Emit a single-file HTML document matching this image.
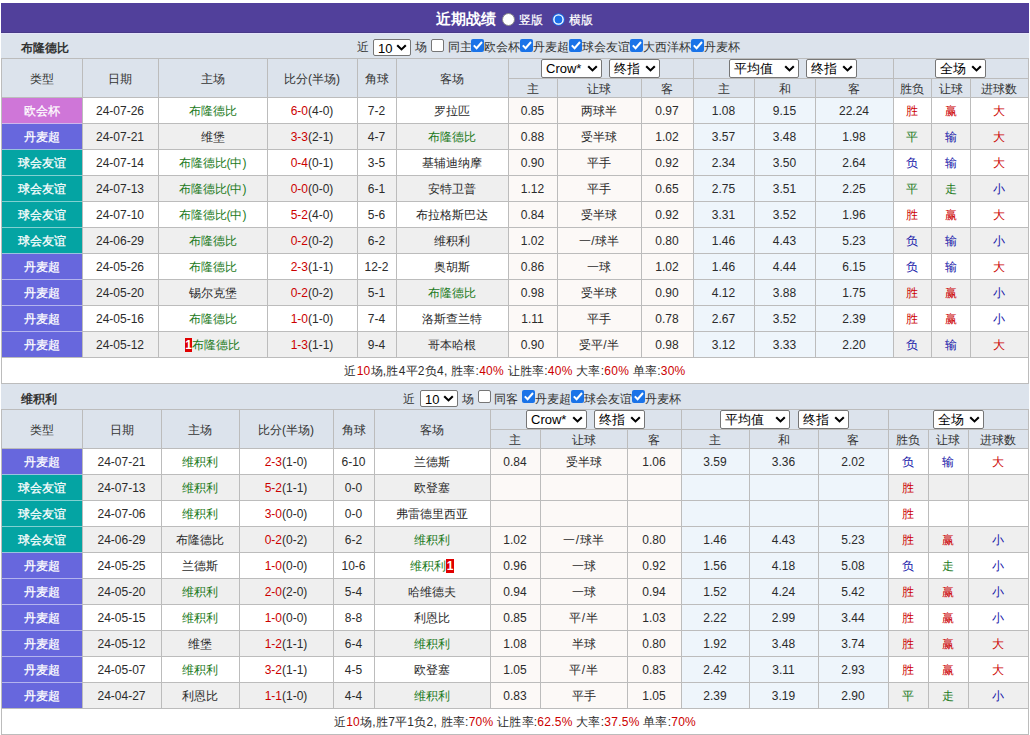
<!DOCTYPE html>
<html><head><meta charset="utf-8"><style>
html,body{margin:0;padding:0;background:#fff;width:1030px;height:735px;overflow:hidden}
body{position:relative;font-family:"Liberation Sans", sans-serif;font-size:12px;color:#2b2b2b}
body>div{position:absolute}
.t{text-align:center;white-space:nowrap}
.sel{background:#fff;border:1px solid #767676;border-radius:2px;box-sizing:border-box;font-size:13px;color:#000}
.sel span{position:absolute;left:4px;top:0;line-height:17px}
</style></head><body>
<div style="left:1px;top:3px;width:1028px;height:30px;background:#51409b;"></div><div style="left:1px;top:32px;width:1028px;height:1px;background:#483a88;"></div><div style="left:1px;top:33px;width:1028px;height:25px;background:#dce3ec;"></div><div style="left:1px;top:33px;width:1028px;height:1px;background:#e4e4fa;"></div><div class="t" style="left:21px;top:33px;height:25px;line-height:31px;font-weight:bold;color:#333;text-align:left">布隆德比</div><div style="left:1px;top:58px;width:1028px;height:39px;background:#dce3ec;"></div><div style="left:1px;top:97px;width:1028px;height:26px;background:#ffffff;"></div><div style="left:508px;top:97px;width:185px;height:26px;background:#fcf9f7;"></div><div style="left:693px;top:97px;width:200px;height:26px;background:#eef5fb;"></div><div style="left:2px;top:98px;width:80px;height:25px;background:#cf76d8;"></div><div style="left:1px;top:123px;width:1028px;height:26px;background:#efefef;"></div><div style="left:508px;top:123px;width:185px;height:26px;background:#fcf9f7;"></div><div style="left:693px;top:123px;width:200px;height:26px;background:#eef5fb;"></div><div style="left:2px;top:124px;width:80px;height:25px;background:#6767dd;"></div><div style="left:1px;top:149px;width:1028px;height:26px;background:#ffffff;"></div><div style="left:508px;top:149px;width:185px;height:26px;background:#fcf9f7;"></div><div style="left:693px;top:149px;width:200px;height:26px;background:#eef5fb;"></div><div style="left:2px;top:150px;width:80px;height:25px;background:#04a4a3;"></div><div style="left:1px;top:175px;width:1028px;height:26px;background:#efefef;"></div><div style="left:508px;top:175px;width:185px;height:26px;background:#fcf9f7;"></div><div style="left:693px;top:175px;width:200px;height:26px;background:#eef5fb;"></div><div style="left:2px;top:176px;width:80px;height:25px;background:#04a4a3;"></div><div style="left:1px;top:201px;width:1028px;height:26px;background:#ffffff;"></div><div style="left:508px;top:201px;width:185px;height:26px;background:#fcf9f7;"></div><div style="left:693px;top:201px;width:200px;height:26px;background:#eef5fb;"></div><div style="left:2px;top:202px;width:80px;height:25px;background:#04a4a3;"></div><div style="left:1px;top:227px;width:1028px;height:26px;background:#efefef;"></div><div style="left:508px;top:227px;width:185px;height:26px;background:#fcf9f7;"></div><div style="left:693px;top:227px;width:200px;height:26px;background:#eef5fb;"></div><div style="left:2px;top:228px;width:80px;height:25px;background:#04a4a3;"></div><div style="left:1px;top:253px;width:1028px;height:26px;background:#ffffff;"></div><div style="left:508px;top:253px;width:185px;height:26px;background:#fcf9f7;"></div><div style="left:693px;top:253px;width:200px;height:26px;background:#eef5fb;"></div><div style="left:2px;top:254px;width:80px;height:25px;background:#6767dd;"></div><div style="left:1px;top:279px;width:1028px;height:26px;background:#efefef;"></div><div style="left:508px;top:279px;width:185px;height:26px;background:#fcf9f7;"></div><div style="left:693px;top:279px;width:200px;height:26px;background:#eef5fb;"></div><div style="left:2px;top:280px;width:80px;height:25px;background:#6767dd;"></div><div style="left:1px;top:305px;width:1028px;height:26px;background:#ffffff;"></div><div style="left:508px;top:305px;width:185px;height:26px;background:#fcf9f7;"></div><div style="left:693px;top:305px;width:200px;height:26px;background:#eef5fb;"></div><div style="left:2px;top:306px;width:80px;height:25px;background:#6767dd;"></div><div style="left:1px;top:331px;width:1028px;height:26px;background:#efefef;"></div><div style="left:508px;top:331px;width:185px;height:26px;background:#fcf9f7;"></div><div style="left:693px;top:331px;width:200px;height:26px;background:#eef5fb;"></div><div style="left:2px;top:332px;width:80px;height:25px;background:#6767dd;"></div><div style="left:1px;top:357px;width:1028px;height:26px;background:#ffffff;"></div><div style="left:1px;top:58px;width:1028px;height:1px;background:#bcbcbc;"></div><div style="left:508px;top:78px;width:521px;height:1px;background:#bcbcbc;"></div><div style="left:1px;top:97px;width:1028px;height:1px;background:#bcbcbc;"></div><div style="left:1px;top:123px;width:1028px;height:1px;background:#bcbcbc;"></div><div style="left:1px;top:149px;width:1028px;height:1px;background:#bcbcbc;"></div><div style="left:1px;top:175px;width:1028px;height:1px;background:#bcbcbc;"></div><div style="left:1px;top:201px;width:1028px;height:1px;background:#bcbcbc;"></div><div style="left:1px;top:227px;width:1028px;height:1px;background:#bcbcbc;"></div><div style="left:1px;top:253px;width:1028px;height:1px;background:#bcbcbc;"></div><div style="left:1px;top:279px;width:1028px;height:1px;background:#bcbcbc;"></div><div style="left:1px;top:305px;width:1028px;height:1px;background:#bcbcbc;"></div><div style="left:1px;top:331px;width:1028px;height:1px;background:#bcbcbc;"></div><div style="left:1px;top:357px;width:1028px;height:1px;background:#bcbcbc;"></div><div style="left:1px;top:383px;width:1028px;height:1px;background:#bcbcbc;"></div><div style="left:1px;top:58px;width:1px;height:326px;background:#bcbcbc;"></div><div style="left:82px;top:58px;width:1px;height:299px;background:#bcbcbc;"></div><div style="left:158px;top:58px;width:1px;height:299px;background:#bcbcbc;"></div><div style="left:267px;top:58px;width:1px;height:299px;background:#bcbcbc;"></div><div style="left:357px;top:58px;width:1px;height:299px;background:#bcbcbc;"></div><div style="left:396px;top:58px;width:1px;height:299px;background:#bcbcbc;"></div><div style="left:508px;top:58px;width:1px;height:299px;background:#bcbcbc;"></div><div style="left:557px;top:78px;width:1px;height:279px;background:#bcbcbc;"></div><div style="left:641px;top:78px;width:1px;height:279px;background:#bcbcbc;"></div><div style="left:693px;top:58px;width:1px;height:299px;background:#bcbcbc;"></div><div style="left:754px;top:78px;width:1px;height:279px;background:#bcbcbc;"></div><div style="left:815px;top:78px;width:1px;height:279px;background:#bcbcbc;"></div><div style="left:893px;top:58px;width:1px;height:299px;background:#bcbcbc;"></div><div style="left:931px;top:78px;width:1px;height:279px;background:#bcbcbc;"></div><div style="left:970px;top:78px;width:1px;height:279px;background:#bcbcbc;"></div><div style="left:1028px;top:58px;width:1px;height:326px;background:#bcbcbc;"></div><div style="left:2px;top:123px;width:80px;height:1px;background:#cdb6ec;"></div><div style="left:2px;top:149px;width:80px;height:1px;background:#9ac2df;"></div><div style="left:2px;top:175px;width:80px;height:1px;background:#81d1d1;"></div><div style="left:2px;top:201px;width:80px;height:1px;background:#81d1d1;"></div><div style="left:2px;top:227px;width:80px;height:1px;background:#81d1d1;"></div><div style="left:2px;top:253px;width:80px;height:1px;background:#9ac2df;"></div><div style="left:2px;top:279px;width:80px;height:1px;background:#b3b3ee;"></div><div style="left:2px;top:305px;width:80px;height:1px;background:#b3b3ee;"></div><div style="left:2px;top:331px;width:80px;height:1px;background:#b3b3ee;"></div><div class="t" style="left:1px;top:60px;width:81px;height:38px;line-height:38px;color:#333">类型</div><div class="t" style="left:82px;top:60px;width:76px;height:38px;line-height:38px;color:#333">日期</div><div class="t" style="left:158px;top:60px;width:109px;height:38px;line-height:38px;color:#333">主场</div><div class="t" style="left:267px;top:60px;width:90px;height:38px;line-height:38px;color:#333">比分(半场)</div><div class="t" style="left:357px;top:60px;width:39px;height:38px;line-height:38px;color:#333">角球</div><div class="t" style="left:396px;top:60px;width:112px;height:38px;line-height:38px;color:#333">客场</div><div class="t" style="left:508px;top:80px;width:49px;height:18px;line-height:18px;color:#333">主</div><div class="t" style="left:557px;top:80px;width:84px;height:18px;line-height:18px;color:#333">让球</div><div class="t" style="left:641px;top:80px;width:52px;height:18px;line-height:18px;color:#333">客</div><div class="t" style="left:693px;top:80px;width:61px;height:18px;line-height:18px;color:#333">主</div><div class="t" style="left:754px;top:80px;width:61px;height:18px;line-height:18px;color:#333">和</div><div class="t" style="left:815px;top:80px;width:78px;height:18px;line-height:18px;color:#333">客</div><div class="t" style="left:893px;top:80px;width:38px;height:18px;line-height:18px;color:#333">胜负</div><div class="t" style="left:931px;top:80px;width:39px;height:18px;line-height:18px;color:#333">让球</div><div class="t" style="left:970px;top:80px;width:58px;height:18px;line-height:18px;color:#333">进球数</div><div class="t" style="left:1px;top:99px;width:81px;height:25px;line-height:25px;color:#fff;-webkit-text-stroke:0.25px #fff">欧会杯</div><div class="t" style="left:82px;top:99px;width:76px;height:25px;line-height:25px;">24-07-26</div><div class="t" style="left:158px;top:99px;width:109px;height:25px;line-height:25px;"><span style="color:#1b7a1b">布隆德比</span></div><div class="t" style="left:267px;top:99px;width:90px;height:25px;line-height:25px;"><span style="color:#cc0000">6-0</span>(4-0)</div><div class="t" style="left:357px;top:99px;width:39px;height:25px;line-height:25px;">7-2</div><div class="t" style="left:396px;top:99px;width:112px;height:25px;line-height:25px;">罗拉匹</div><div class="t" style="left:508px;top:99px;width:49px;height:25px;line-height:25px;">0.85</div><div class="t" style="left:557px;top:99px;width:84px;height:25px;line-height:25px;">两球半</div><div class="t" style="left:641px;top:99px;width:52px;height:25px;line-height:25px;">0.97</div><div class="t" style="left:693px;top:99px;width:61px;height:25px;line-height:25px;">1.08</div><div class="t" style="left:754px;top:99px;width:61px;height:25px;line-height:25px;">9.15</div><div class="t" style="left:815px;top:99px;width:78px;height:25px;line-height:25px;">22.24</div><div class="t" style="left:893px;top:99px;width:38px;height:25px;line-height:25px;color:#cc0000">胜</div><div class="t" style="left:931px;top:99px;width:39px;height:25px;line-height:25px;color:#cc0000">赢</div><div class="t" style="left:970px;top:99px;width:58px;height:25px;line-height:25px;color:#cc0000">大</div><div class="t" style="left:1px;top:125px;width:81px;height:25px;line-height:25px;color:#fff;-webkit-text-stroke:0.25px #fff">丹麦超</div><div class="t" style="left:82px;top:125px;width:76px;height:25px;line-height:25px;">24-07-21</div><div class="t" style="left:158px;top:125px;width:109px;height:25px;line-height:25px;">维堡</div><div class="t" style="left:267px;top:125px;width:90px;height:25px;line-height:25px;"><span style="color:#cc0000">3-3</span>(2-1)</div><div class="t" style="left:357px;top:125px;width:39px;height:25px;line-height:25px;">4-7</div><div class="t" style="left:396px;top:125px;width:112px;height:25px;line-height:25px;"><span style="color:#1b7a1b">布隆德比</span></div><div class="t" style="left:508px;top:125px;width:49px;height:25px;line-height:25px;">0.88</div><div class="t" style="left:557px;top:125px;width:84px;height:25px;line-height:25px;">受半球</div><div class="t" style="left:641px;top:125px;width:52px;height:25px;line-height:25px;">1.02</div><div class="t" style="left:693px;top:125px;width:61px;height:25px;line-height:25px;">3.57</div><div class="t" style="left:754px;top:125px;width:61px;height:25px;line-height:25px;">3.48</div><div class="t" style="left:815px;top:125px;width:78px;height:25px;line-height:25px;">1.98</div><div class="t" style="left:893px;top:125px;width:38px;height:25px;line-height:25px;color:#1b7a1b">平</div><div class="t" style="left:931px;top:125px;width:39px;height:25px;line-height:25px;color:#1414a8">输</div><div class="t" style="left:970px;top:125px;width:58px;height:25px;line-height:25px;color:#cc0000">大</div><div class="t" style="left:1px;top:151px;width:81px;height:25px;line-height:25px;color:#fff;-webkit-text-stroke:0.25px #fff">球会友谊</div><div class="t" style="left:82px;top:151px;width:76px;height:25px;line-height:25px;">24-07-14</div><div class="t" style="left:158px;top:151px;width:109px;height:25px;line-height:25px;"><span style="color:#1b7a1b">布隆德比(中)</span></div><div class="t" style="left:267px;top:151px;width:90px;height:25px;line-height:25px;"><span style="color:#cc0000">0-4</span>(0-1)</div><div class="t" style="left:357px;top:151px;width:39px;height:25px;line-height:25px;">3-5</div><div class="t" style="left:396px;top:151px;width:112px;height:25px;line-height:25px;">基辅迪纳摩</div><div class="t" style="left:508px;top:151px;width:49px;height:25px;line-height:25px;">0.90</div><div class="t" style="left:557px;top:151px;width:84px;height:25px;line-height:25px;">平手</div><div class="t" style="left:641px;top:151px;width:52px;height:25px;line-height:25px;">0.92</div><div class="t" style="left:693px;top:151px;width:61px;height:25px;line-height:25px;">2.34</div><div class="t" style="left:754px;top:151px;width:61px;height:25px;line-height:25px;">3.50</div><div class="t" style="left:815px;top:151px;width:78px;height:25px;line-height:25px;">2.64</div><div class="t" style="left:893px;top:151px;width:38px;height:25px;line-height:25px;color:#1414a8">负</div><div class="t" style="left:931px;top:151px;width:39px;height:25px;line-height:25px;color:#1414a8">输</div><div class="t" style="left:970px;top:151px;width:58px;height:25px;line-height:25px;color:#cc0000">大</div><div class="t" style="left:1px;top:177px;width:81px;height:25px;line-height:25px;color:#fff;-webkit-text-stroke:0.25px #fff">球会友谊</div><div class="t" style="left:82px;top:177px;width:76px;height:25px;line-height:25px;">24-07-13</div><div class="t" style="left:158px;top:177px;width:109px;height:25px;line-height:25px;"><span style="color:#1b7a1b">布隆德比(中)</span></div><div class="t" style="left:267px;top:177px;width:90px;height:25px;line-height:25px;"><span style="color:#cc0000">0-0</span>(0-0)</div><div class="t" style="left:357px;top:177px;width:39px;height:25px;line-height:25px;">6-1</div><div class="t" style="left:396px;top:177px;width:112px;height:25px;line-height:25px;">安特卫普</div><div class="t" style="left:508px;top:177px;width:49px;height:25px;line-height:25px;">1.12</div><div class="t" style="left:557px;top:177px;width:84px;height:25px;line-height:25px;">平手</div><div class="t" style="left:641px;top:177px;width:52px;height:25px;line-height:25px;">0.65</div><div class="t" style="left:693px;top:177px;width:61px;height:25px;line-height:25px;">2.75</div><div class="t" style="left:754px;top:177px;width:61px;height:25px;line-height:25px;">3.51</div><div class="t" style="left:815px;top:177px;width:78px;height:25px;line-height:25px;">2.25</div><div class="t" style="left:893px;top:177px;width:38px;height:25px;line-height:25px;color:#1b7a1b">平</div><div class="t" style="left:931px;top:177px;width:39px;height:25px;line-height:25px;color:#1b7a1b">走</div><div class="t" style="left:970px;top:177px;width:58px;height:25px;line-height:25px;color:#1414a8">小</div><div class="t" style="left:1px;top:203px;width:81px;height:25px;line-height:25px;color:#fff;-webkit-text-stroke:0.25px #fff">球会友谊</div><div class="t" style="left:82px;top:203px;width:76px;height:25px;line-height:25px;">24-07-10</div><div class="t" style="left:158px;top:203px;width:109px;height:25px;line-height:25px;"><span style="color:#1b7a1b">布隆德比(中)</span></div><div class="t" style="left:267px;top:203px;width:90px;height:25px;line-height:25px;"><span style="color:#cc0000">5-2</span>(4-0)</div><div class="t" style="left:357px;top:203px;width:39px;height:25px;line-height:25px;">5-6</div><div class="t" style="left:396px;top:203px;width:112px;height:25px;line-height:25px;">布拉格斯巴达</div><div class="t" style="left:508px;top:203px;width:49px;height:25px;line-height:25px;">0.84</div><div class="t" style="left:557px;top:203px;width:84px;height:25px;line-height:25px;">受半球</div><div class="t" style="left:641px;top:203px;width:52px;height:25px;line-height:25px;">0.92</div><div class="t" style="left:693px;top:203px;width:61px;height:25px;line-height:25px;">3.31</div><div class="t" style="left:754px;top:203px;width:61px;height:25px;line-height:25px;">3.52</div><div class="t" style="left:815px;top:203px;width:78px;height:25px;line-height:25px;">1.96</div><div class="t" style="left:893px;top:203px;width:38px;height:25px;line-height:25px;color:#cc0000">胜</div><div class="t" style="left:931px;top:203px;width:39px;height:25px;line-height:25px;color:#cc0000">赢</div><div class="t" style="left:970px;top:203px;width:58px;height:25px;line-height:25px;color:#cc0000">大</div><div class="t" style="left:1px;top:229px;width:81px;height:25px;line-height:25px;color:#fff;-webkit-text-stroke:0.25px #fff">球会友谊</div><div class="t" style="left:82px;top:229px;width:76px;height:25px;line-height:25px;">24-06-29</div><div class="t" style="left:158px;top:229px;width:109px;height:25px;line-height:25px;"><span style="color:#1b7a1b">布隆德比</span></div><div class="t" style="left:267px;top:229px;width:90px;height:25px;line-height:25px;"><span style="color:#cc0000">0-2</span>(0-2)</div><div class="t" style="left:357px;top:229px;width:39px;height:25px;line-height:25px;">6-2</div><div class="t" style="left:396px;top:229px;width:112px;height:25px;line-height:25px;">维积利</div><div class="t" style="left:508px;top:229px;width:49px;height:25px;line-height:25px;">1.02</div><div class="t" style="left:557px;top:229px;width:84px;height:25px;line-height:25px;">一<span style="margin:0 0.6px">/</span>球半</div><div class="t" style="left:641px;top:229px;width:52px;height:25px;line-height:25px;">0.80</div><div class="t" style="left:693px;top:229px;width:61px;height:25px;line-height:25px;">1.46</div><div class="t" style="left:754px;top:229px;width:61px;height:25px;line-height:25px;">4.43</div><div class="t" style="left:815px;top:229px;width:78px;height:25px;line-height:25px;">5.23</div><div class="t" style="left:893px;top:229px;width:38px;height:25px;line-height:25px;color:#1414a8">负</div><div class="t" style="left:931px;top:229px;width:39px;height:25px;line-height:25px;color:#1414a8">输</div><div class="t" style="left:970px;top:229px;width:58px;height:25px;line-height:25px;color:#1414a8">小</div><div class="t" style="left:1px;top:255px;width:81px;height:25px;line-height:25px;color:#fff;-webkit-text-stroke:0.25px #fff">丹麦超</div><div class="t" style="left:82px;top:255px;width:76px;height:25px;line-height:25px;">24-05-26</div><div class="t" style="left:158px;top:255px;width:109px;height:25px;line-height:25px;"><span style="color:#1b7a1b">布隆德比</span></div><div class="t" style="left:267px;top:255px;width:90px;height:25px;line-height:25px;"><span style="color:#cc0000">2-3</span>(1-1)</div><div class="t" style="left:357px;top:255px;width:39px;height:25px;line-height:25px;">12-2</div><div class="t" style="left:396px;top:255px;width:112px;height:25px;line-height:25px;">奥胡斯</div><div class="t" style="left:508px;top:255px;width:49px;height:25px;line-height:25px;">0.86</div><div class="t" style="left:557px;top:255px;width:84px;height:25px;line-height:25px;">一球</div><div class="t" style="left:641px;top:255px;width:52px;height:25px;line-height:25px;">1.02</div><div class="t" style="left:693px;top:255px;width:61px;height:25px;line-height:25px;">1.46</div><div class="t" style="left:754px;top:255px;width:61px;height:25px;line-height:25px;">4.44</div><div class="t" style="left:815px;top:255px;width:78px;height:25px;line-height:25px;">6.15</div><div class="t" style="left:893px;top:255px;width:38px;height:25px;line-height:25px;color:#1414a8">负</div><div class="t" style="left:931px;top:255px;width:39px;height:25px;line-height:25px;color:#1414a8">输</div><div class="t" style="left:970px;top:255px;width:58px;height:25px;line-height:25px;color:#cc0000">大</div><div class="t" style="left:1px;top:281px;width:81px;height:25px;line-height:25px;color:#fff;-webkit-text-stroke:0.25px #fff">丹麦超</div><div class="t" style="left:82px;top:281px;width:76px;height:25px;line-height:25px;">24-05-20</div><div class="t" style="left:158px;top:281px;width:109px;height:25px;line-height:25px;">锡尔克堡</div><div class="t" style="left:267px;top:281px;width:90px;height:25px;line-height:25px;"><span style="color:#cc0000">0-2</span>(0-2)</div><div class="t" style="left:357px;top:281px;width:39px;height:25px;line-height:25px;">5-1</div><div class="t" style="left:396px;top:281px;width:112px;height:25px;line-height:25px;"><span style="color:#1b7a1b">布隆德比</span></div><div class="t" style="left:508px;top:281px;width:49px;height:25px;line-height:25px;">0.98</div><div class="t" style="left:557px;top:281px;width:84px;height:25px;line-height:25px;">受半球</div><div class="t" style="left:641px;top:281px;width:52px;height:25px;line-height:25px;">0.90</div><div class="t" style="left:693px;top:281px;width:61px;height:25px;line-height:25px;">4.12</div><div class="t" style="left:754px;top:281px;width:61px;height:25px;line-height:25px;">3.88</div><div class="t" style="left:815px;top:281px;width:78px;height:25px;line-height:25px;">1.75</div><div class="t" style="left:893px;top:281px;width:38px;height:25px;line-height:25px;color:#cc0000">胜</div><div class="t" style="left:931px;top:281px;width:39px;height:25px;line-height:25px;color:#cc0000">赢</div><div class="t" style="left:970px;top:281px;width:58px;height:25px;line-height:25px;color:#1414a8">小</div><div class="t" style="left:1px;top:307px;width:81px;height:25px;line-height:25px;color:#fff;-webkit-text-stroke:0.25px #fff">丹麦超</div><div class="t" style="left:82px;top:307px;width:76px;height:25px;line-height:25px;">24-05-16</div><div class="t" style="left:158px;top:307px;width:109px;height:25px;line-height:25px;"><span style="color:#1b7a1b">布隆德比</span></div><div class="t" style="left:267px;top:307px;width:90px;height:25px;line-height:25px;"><span style="color:#cc0000">1-0</span>(1-0)</div><div class="t" style="left:357px;top:307px;width:39px;height:25px;line-height:25px;">7-4</div><div class="t" style="left:396px;top:307px;width:112px;height:25px;line-height:25px;">洛斯查兰特</div><div class="t" style="left:508px;top:307px;width:49px;height:25px;line-height:25px;">1.11</div><div class="t" style="left:557px;top:307px;width:84px;height:25px;line-height:25px;">平手</div><div class="t" style="left:641px;top:307px;width:52px;height:25px;line-height:25px;">0.78</div><div class="t" style="left:693px;top:307px;width:61px;height:25px;line-height:25px;">2.67</div><div class="t" style="left:754px;top:307px;width:61px;height:25px;line-height:25px;">3.52</div><div class="t" style="left:815px;top:307px;width:78px;height:25px;line-height:25px;">2.39</div><div class="t" style="left:893px;top:307px;width:38px;height:25px;line-height:25px;color:#cc0000">胜</div><div class="t" style="left:931px;top:307px;width:39px;height:25px;line-height:25px;color:#cc0000">赢</div><div class="t" style="left:970px;top:307px;width:58px;height:25px;line-height:25px;color:#1414a8">小</div><div class="t" style="left:1px;top:333px;width:81px;height:25px;line-height:25px;color:#fff;-webkit-text-stroke:0.25px #fff">丹麦超</div><div class="t" style="left:82px;top:333px;width:76px;height:25px;line-height:25px;">24-05-12</div><div class="t" style="left:158px;top:333px;width:109px;height:25px;line-height:25px;"><span style="background:#e00000;color:#fff;font-weight:bold;padding:0;display:inline-block;width:7px;text-align:center;line-height:14px;vertical-align:0px">1</span><span style="color:#1b7a1b">布隆德比</span></div><div class="t" style="left:267px;top:333px;width:90px;height:25px;line-height:25px;"><span style="color:#cc0000">1-3</span>(1-1)</div><div class="t" style="left:357px;top:333px;width:39px;height:25px;line-height:25px;">9-4</div><div class="t" style="left:396px;top:333px;width:112px;height:25px;line-height:25px;">哥本哈根</div><div class="t" style="left:508px;top:333px;width:49px;height:25px;line-height:25px;">0.90</div><div class="t" style="left:557px;top:333px;width:84px;height:25px;line-height:25px;">受平<span style="margin:0 0.6px">/</span>半</div><div class="t" style="left:641px;top:333px;width:52px;height:25px;line-height:25px;">0.98</div><div class="t" style="left:693px;top:333px;width:61px;height:25px;line-height:25px;">3.12</div><div class="t" style="left:754px;top:333px;width:61px;height:25px;line-height:25px;">3.33</div><div class="t" style="left:815px;top:333px;width:78px;height:25px;line-height:25px;">2.20</div><div class="t" style="left:893px;top:333px;width:38px;height:25px;line-height:25px;color:#1414a8">负</div><div class="t" style="left:931px;top:333px;width:39px;height:25px;line-height:25px;color:#1414a8">输</div><div class="t" style="left:970px;top:333px;width:58px;height:25px;line-height:25px;color:#cc0000">大</div><div class="t" style="left:2px;top:359px;width:1026px;height:25px;line-height:25px;letter-spacing:0.25px">近<span style="color:#cc0000">10</span>场,胜4平2负4, 胜率:<span style="color:#cc0000">40%</span> 让胜率:<span style="color:#cc0000">40%</span> 大率:<span style="color:#cc0000">60%</span> 单率:<span style="color:#cc0000">30%</span></div><div style="left:1px;top:384px;width:1028px;height:25px;background:#dce3ec;"></div><div class="t" style="left:21px;top:384px;height:25px;line-height:31px;font-weight:bold;color:#333;text-align:left">维积利</div><div style="left:1px;top:409px;width:1028px;height:39px;background:#dce3ec;"></div><div style="left:1px;top:448px;width:1028px;height:26px;background:#ffffff;"></div><div style="left:490px;top:448px;width:191px;height:26px;background:#fcf9f7;"></div><div style="left:681px;top:448px;width:207px;height:26px;background:#eef5fb;"></div><div style="left:2px;top:449px;width:80px;height:25px;background:#6767dd;"></div><div style="left:1px;top:474px;width:1028px;height:26px;background:#efefef;"></div><div style="left:490px;top:474px;width:191px;height:26px;background:#fcf9f7;"></div><div style="left:681px;top:474px;width:207px;height:26px;background:#eef5fb;"></div><div style="left:2px;top:475px;width:80px;height:25px;background:#04a4a3;"></div><div style="left:1px;top:500px;width:1028px;height:26px;background:#ffffff;"></div><div style="left:490px;top:500px;width:191px;height:26px;background:#fcf9f7;"></div><div style="left:681px;top:500px;width:207px;height:26px;background:#eef5fb;"></div><div style="left:2px;top:501px;width:80px;height:25px;background:#04a4a3;"></div><div style="left:1px;top:526px;width:1028px;height:26px;background:#efefef;"></div><div style="left:490px;top:526px;width:191px;height:26px;background:#fcf9f7;"></div><div style="left:681px;top:526px;width:207px;height:26px;background:#eef5fb;"></div><div style="left:2px;top:527px;width:80px;height:25px;background:#04a4a3;"></div><div style="left:1px;top:552px;width:1028px;height:26px;background:#ffffff;"></div><div style="left:490px;top:552px;width:191px;height:26px;background:#fcf9f7;"></div><div style="left:681px;top:552px;width:207px;height:26px;background:#eef5fb;"></div><div style="left:2px;top:553px;width:80px;height:25px;background:#6767dd;"></div><div style="left:1px;top:578px;width:1028px;height:26px;background:#efefef;"></div><div style="left:490px;top:578px;width:191px;height:26px;background:#fcf9f7;"></div><div style="left:681px;top:578px;width:207px;height:26px;background:#eef5fb;"></div><div style="left:2px;top:579px;width:80px;height:25px;background:#6767dd;"></div><div style="left:1px;top:604px;width:1028px;height:26px;background:#ffffff;"></div><div style="left:490px;top:604px;width:191px;height:26px;background:#fcf9f7;"></div><div style="left:681px;top:604px;width:207px;height:26px;background:#eef5fb;"></div><div style="left:2px;top:605px;width:80px;height:25px;background:#6767dd;"></div><div style="left:1px;top:630px;width:1028px;height:26px;background:#efefef;"></div><div style="left:490px;top:630px;width:191px;height:26px;background:#fcf9f7;"></div><div style="left:681px;top:630px;width:207px;height:26px;background:#eef5fb;"></div><div style="left:2px;top:631px;width:80px;height:25px;background:#6767dd;"></div><div style="left:1px;top:656px;width:1028px;height:26px;background:#ffffff;"></div><div style="left:490px;top:656px;width:191px;height:26px;background:#fcf9f7;"></div><div style="left:681px;top:656px;width:207px;height:26px;background:#eef5fb;"></div><div style="left:2px;top:657px;width:80px;height:25px;background:#6767dd;"></div><div style="left:1px;top:682px;width:1028px;height:26px;background:#efefef;"></div><div style="left:490px;top:682px;width:191px;height:26px;background:#fcf9f7;"></div><div style="left:681px;top:682px;width:207px;height:26px;background:#eef5fb;"></div><div style="left:2px;top:683px;width:80px;height:25px;background:#6767dd;"></div><div style="left:1px;top:708px;width:1028px;height:26px;background:#ffffff;"></div><div style="left:1px;top:409px;width:1028px;height:1px;background:#bcbcbc;"></div><div style="left:490px;top:429px;width:539px;height:1px;background:#bcbcbc;"></div><div style="left:1px;top:448px;width:1028px;height:1px;background:#bcbcbc;"></div><div style="left:1px;top:474px;width:1028px;height:1px;background:#bcbcbc;"></div><div style="left:1px;top:500px;width:1028px;height:1px;background:#bcbcbc;"></div><div style="left:1px;top:526px;width:1028px;height:1px;background:#bcbcbc;"></div><div style="left:1px;top:552px;width:1028px;height:1px;background:#bcbcbc;"></div><div style="left:1px;top:578px;width:1028px;height:1px;background:#bcbcbc;"></div><div style="left:1px;top:604px;width:1028px;height:1px;background:#bcbcbc;"></div><div style="left:1px;top:630px;width:1028px;height:1px;background:#bcbcbc;"></div><div style="left:1px;top:656px;width:1028px;height:1px;background:#bcbcbc;"></div><div style="left:1px;top:682px;width:1028px;height:1px;background:#bcbcbc;"></div><div style="left:1px;top:708px;width:1028px;height:1px;background:#bcbcbc;"></div><div style="left:1px;top:734px;width:1028px;height:1px;background:#bcbcbc;"></div><div style="left:1px;top:409px;width:1px;height:326px;background:#bcbcbc;"></div><div style="left:82px;top:409px;width:1px;height:299px;background:#bcbcbc;"></div><div style="left:161px;top:409px;width:1px;height:299px;background:#bcbcbc;"></div><div style="left:239px;top:409px;width:1px;height:299px;background:#bcbcbc;"></div><div style="left:333px;top:409px;width:1px;height:299px;background:#bcbcbc;"></div><div style="left:374px;top:409px;width:1px;height:299px;background:#bcbcbc;"></div><div style="left:490px;top:409px;width:1px;height:299px;background:#bcbcbc;"></div><div style="left:540px;top:429px;width:1px;height:279px;background:#bcbcbc;"></div><div style="left:627px;top:429px;width:1px;height:279px;background:#bcbcbc;"></div><div style="left:681px;top:409px;width:1px;height:299px;background:#bcbcbc;"></div><div style="left:749px;top:429px;width:1px;height:279px;background:#bcbcbc;"></div><div style="left:818px;top:429px;width:1px;height:279px;background:#bcbcbc;"></div><div style="left:888px;top:409px;width:1px;height:299px;background:#bcbcbc;"></div><div style="left:928px;top:429px;width:1px;height:279px;background:#bcbcbc;"></div><div style="left:968px;top:429px;width:1px;height:279px;background:#bcbcbc;"></div><div style="left:1028px;top:409px;width:1px;height:326px;background:#bcbcbc;"></div><div style="left:2px;top:474px;width:80px;height:1px;background:#9ac2df;"></div><div style="left:2px;top:500px;width:80px;height:1px;background:#81d1d1;"></div><div style="left:2px;top:526px;width:80px;height:1px;background:#81d1d1;"></div><div style="left:2px;top:552px;width:80px;height:1px;background:#9ac2df;"></div><div style="left:2px;top:578px;width:80px;height:1px;background:#b3b3ee;"></div><div style="left:2px;top:604px;width:80px;height:1px;background:#b3b3ee;"></div><div style="left:2px;top:630px;width:80px;height:1px;background:#b3b3ee;"></div><div style="left:2px;top:656px;width:80px;height:1px;background:#b3b3ee;"></div><div style="left:2px;top:682px;width:80px;height:1px;background:#b3b3ee;"></div><div class="t" style="left:1px;top:411px;width:81px;height:38px;line-height:38px;color:#333">类型</div><div class="t" style="left:82px;top:411px;width:79px;height:38px;line-height:38px;color:#333">日期</div><div class="t" style="left:161px;top:411px;width:78px;height:38px;line-height:38px;color:#333">主场</div><div class="t" style="left:239px;top:411px;width:94px;height:38px;line-height:38px;color:#333">比分(半场)</div><div class="t" style="left:333px;top:411px;width:41px;height:38px;line-height:38px;color:#333">角球</div><div class="t" style="left:374px;top:411px;width:116px;height:38px;line-height:38px;color:#333">客场</div><div class="t" style="left:490px;top:431px;width:50px;height:18px;line-height:18px;color:#333">主</div><div class="t" style="left:540px;top:431px;width:87px;height:18px;line-height:18px;color:#333">让球</div><div class="t" style="left:627px;top:431px;width:54px;height:18px;line-height:18px;color:#333">客</div><div class="t" style="left:681px;top:431px;width:68px;height:18px;line-height:18px;color:#333">主</div><div class="t" style="left:749px;top:431px;width:69px;height:18px;line-height:18px;color:#333">和</div><div class="t" style="left:818px;top:431px;width:70px;height:18px;line-height:18px;color:#333">客</div><div class="t" style="left:888px;top:431px;width:40px;height:18px;line-height:18px;color:#333">胜负</div><div class="t" style="left:928px;top:431px;width:40px;height:18px;line-height:18px;color:#333">让球</div><div class="t" style="left:968px;top:431px;width:60px;height:18px;line-height:18px;color:#333">进球数</div><div class="t" style="left:1px;top:450px;width:81px;height:25px;line-height:25px;color:#fff;-webkit-text-stroke:0.25px #fff">丹麦超</div><div class="t" style="left:82px;top:450px;width:79px;height:25px;line-height:25px;">24-07-21</div><div class="t" style="left:161px;top:450px;width:78px;height:25px;line-height:25px;"><span style="color:#1b7a1b">维积利</span></div><div class="t" style="left:239px;top:450px;width:94px;height:25px;line-height:25px;"><span style="color:#cc0000">2-3</span>(1-0)</div><div class="t" style="left:333px;top:450px;width:41px;height:25px;line-height:25px;">6-10</div><div class="t" style="left:374px;top:450px;width:116px;height:25px;line-height:25px;">兰德斯</div><div class="t" style="left:490px;top:450px;width:50px;height:25px;line-height:25px;">0.84</div><div class="t" style="left:540px;top:450px;width:87px;height:25px;line-height:25px;">受半球</div><div class="t" style="left:627px;top:450px;width:54px;height:25px;line-height:25px;">1.06</div><div class="t" style="left:681px;top:450px;width:68px;height:25px;line-height:25px;">3.59</div><div class="t" style="left:749px;top:450px;width:69px;height:25px;line-height:25px;">3.36</div><div class="t" style="left:818px;top:450px;width:70px;height:25px;line-height:25px;">2.02</div><div class="t" style="left:888px;top:450px;width:40px;height:25px;line-height:25px;color:#1414a8">负</div><div class="t" style="left:928px;top:450px;width:40px;height:25px;line-height:25px;color:#1414a8">输</div><div class="t" style="left:968px;top:450px;width:60px;height:25px;line-height:25px;color:#cc0000">大</div><div class="t" style="left:1px;top:476px;width:81px;height:25px;line-height:25px;color:#fff;-webkit-text-stroke:0.25px #fff">球会友谊</div><div class="t" style="left:82px;top:476px;width:79px;height:25px;line-height:25px;">24-07-13</div><div class="t" style="left:161px;top:476px;width:78px;height:25px;line-height:25px;"><span style="color:#1b7a1b">维积利</span></div><div class="t" style="left:239px;top:476px;width:94px;height:25px;line-height:25px;"><span style="color:#cc0000">5-2</span>(1-1)</div><div class="t" style="left:333px;top:476px;width:41px;height:25px;line-height:25px;">0-0</div><div class="t" style="left:374px;top:476px;width:116px;height:25px;line-height:25px;">欧登塞</div><div class="t" style="left:490px;top:476px;width:50px;height:25px;line-height:25px;"></div><div class="t" style="left:540px;top:476px;width:87px;height:25px;line-height:25px;"></div><div class="t" style="left:627px;top:476px;width:54px;height:25px;line-height:25px;"></div><div class="t" style="left:681px;top:476px;width:68px;height:25px;line-height:25px;"></div><div class="t" style="left:749px;top:476px;width:69px;height:25px;line-height:25px;"></div><div class="t" style="left:818px;top:476px;width:70px;height:25px;line-height:25px;"></div><div class="t" style="left:888px;top:476px;width:40px;height:25px;line-height:25px;color:#cc0000">胜</div><div class="t" style="left:1px;top:502px;width:81px;height:25px;line-height:25px;color:#fff;-webkit-text-stroke:0.25px #fff">球会友谊</div><div class="t" style="left:82px;top:502px;width:79px;height:25px;line-height:25px;">24-07-06</div><div class="t" style="left:161px;top:502px;width:78px;height:25px;line-height:25px;"><span style="color:#1b7a1b">维积利</span></div><div class="t" style="left:239px;top:502px;width:94px;height:25px;line-height:25px;"><span style="color:#cc0000">3-0</span>(0-0)</div><div class="t" style="left:333px;top:502px;width:41px;height:25px;line-height:25px;">0-0</div><div class="t" style="left:374px;top:502px;width:116px;height:25px;line-height:25px;">弗雷德里西亚</div><div class="t" style="left:490px;top:502px;width:50px;height:25px;line-height:25px;"></div><div class="t" style="left:540px;top:502px;width:87px;height:25px;line-height:25px;"></div><div class="t" style="left:627px;top:502px;width:54px;height:25px;line-height:25px;"></div><div class="t" style="left:681px;top:502px;width:68px;height:25px;line-height:25px;"></div><div class="t" style="left:749px;top:502px;width:69px;height:25px;line-height:25px;"></div><div class="t" style="left:818px;top:502px;width:70px;height:25px;line-height:25px;"></div><div class="t" style="left:888px;top:502px;width:40px;height:25px;line-height:25px;color:#cc0000">胜</div><div class="t" style="left:1px;top:528px;width:81px;height:25px;line-height:25px;color:#fff;-webkit-text-stroke:0.25px #fff">球会友谊</div><div class="t" style="left:82px;top:528px;width:79px;height:25px;line-height:25px;">24-06-29</div><div class="t" style="left:161px;top:528px;width:78px;height:25px;line-height:25px;">布隆德比</div><div class="t" style="left:239px;top:528px;width:94px;height:25px;line-height:25px;"><span style="color:#cc0000">0-2</span>(0-2)</div><div class="t" style="left:333px;top:528px;width:41px;height:25px;line-height:25px;">6-2</div><div class="t" style="left:374px;top:528px;width:116px;height:25px;line-height:25px;"><span style="color:#1b7a1b">维积利</span></div><div class="t" style="left:490px;top:528px;width:50px;height:25px;line-height:25px;">1.02</div><div class="t" style="left:540px;top:528px;width:87px;height:25px;line-height:25px;">一<span style="margin:0 0.6px">/</span>球半</div><div class="t" style="left:627px;top:528px;width:54px;height:25px;line-height:25px;">0.80</div><div class="t" style="left:681px;top:528px;width:68px;height:25px;line-height:25px;">1.46</div><div class="t" style="left:749px;top:528px;width:69px;height:25px;line-height:25px;">4.43</div><div class="t" style="left:818px;top:528px;width:70px;height:25px;line-height:25px;">5.23</div><div class="t" style="left:888px;top:528px;width:40px;height:25px;line-height:25px;color:#cc0000">胜</div><div class="t" style="left:928px;top:528px;width:40px;height:25px;line-height:25px;color:#cc0000">赢</div><div class="t" style="left:968px;top:528px;width:60px;height:25px;line-height:25px;color:#1414a8">小</div><div class="t" style="left:1px;top:554px;width:81px;height:25px;line-height:25px;color:#fff;-webkit-text-stroke:0.25px #fff">丹麦超</div><div class="t" style="left:82px;top:554px;width:79px;height:25px;line-height:25px;">24-05-25</div><div class="t" style="left:161px;top:554px;width:78px;height:25px;line-height:25px;">兰德斯</div><div class="t" style="left:239px;top:554px;width:94px;height:25px;line-height:25px;"><span style="color:#cc0000">1-0</span>(0-0)</div><div class="t" style="left:333px;top:554px;width:41px;height:25px;line-height:25px;">10-6</div><div class="t" style="left:374px;top:554px;width:116px;height:25px;line-height:25px;"><span style="color:#1b7a1b">维积利</span><span style="background:#e00000;color:#fff;font-weight:bold;padding:0;display:inline-block;width:8px;text-align:center;line-height:14px;vertical-align:0px">1</span></div><div class="t" style="left:490px;top:554px;width:50px;height:25px;line-height:25px;">0.96</div><div class="t" style="left:540px;top:554px;width:87px;height:25px;line-height:25px;">一球</div><div class="t" style="left:627px;top:554px;width:54px;height:25px;line-height:25px;">0.92</div><div class="t" style="left:681px;top:554px;width:68px;height:25px;line-height:25px;">1.56</div><div class="t" style="left:749px;top:554px;width:69px;height:25px;line-height:25px;">4.18</div><div class="t" style="left:818px;top:554px;width:70px;height:25px;line-height:25px;">5.08</div><div class="t" style="left:888px;top:554px;width:40px;height:25px;line-height:25px;color:#1414a8">负</div><div class="t" style="left:928px;top:554px;width:40px;height:25px;line-height:25px;color:#1b7a1b">走</div><div class="t" style="left:968px;top:554px;width:60px;height:25px;line-height:25px;color:#1414a8">小</div><div class="t" style="left:1px;top:580px;width:81px;height:25px;line-height:25px;color:#fff;-webkit-text-stroke:0.25px #fff">丹麦超</div><div class="t" style="left:82px;top:580px;width:79px;height:25px;line-height:25px;">24-05-20</div><div class="t" style="left:161px;top:580px;width:78px;height:25px;line-height:25px;"><span style="color:#1b7a1b">维积利</span></div><div class="t" style="left:239px;top:580px;width:94px;height:25px;line-height:25px;"><span style="color:#cc0000">2-0</span>(2-0)</div><div class="t" style="left:333px;top:580px;width:41px;height:25px;line-height:25px;">5-4</div><div class="t" style="left:374px;top:580px;width:116px;height:25px;line-height:25px;">哈维德夫</div><div class="t" style="left:490px;top:580px;width:50px;height:25px;line-height:25px;">0.94</div><div class="t" style="left:540px;top:580px;width:87px;height:25px;line-height:25px;">一球</div><div class="t" style="left:627px;top:580px;width:54px;height:25px;line-height:25px;">0.94</div><div class="t" style="left:681px;top:580px;width:68px;height:25px;line-height:25px;">1.52</div><div class="t" style="left:749px;top:580px;width:69px;height:25px;line-height:25px;">4.24</div><div class="t" style="left:818px;top:580px;width:70px;height:25px;line-height:25px;">5.42</div><div class="t" style="left:888px;top:580px;width:40px;height:25px;line-height:25px;color:#cc0000">胜</div><div class="t" style="left:928px;top:580px;width:40px;height:25px;line-height:25px;color:#cc0000">赢</div><div class="t" style="left:968px;top:580px;width:60px;height:25px;line-height:25px;color:#1414a8">小</div><div class="t" style="left:1px;top:606px;width:81px;height:25px;line-height:25px;color:#fff;-webkit-text-stroke:0.25px #fff">丹麦超</div><div class="t" style="left:82px;top:606px;width:79px;height:25px;line-height:25px;">24-05-15</div><div class="t" style="left:161px;top:606px;width:78px;height:25px;line-height:25px;"><span style="color:#1b7a1b">维积利</span></div><div class="t" style="left:239px;top:606px;width:94px;height:25px;line-height:25px;"><span style="color:#cc0000">1-0</span>(0-0)</div><div class="t" style="left:333px;top:606px;width:41px;height:25px;line-height:25px;">8-8</div><div class="t" style="left:374px;top:606px;width:116px;height:25px;line-height:25px;">利恩比</div><div class="t" style="left:490px;top:606px;width:50px;height:25px;line-height:25px;">0.85</div><div class="t" style="left:540px;top:606px;width:87px;height:25px;line-height:25px;">平<span style="margin:0 0.6px">/</span>半</div><div class="t" style="left:627px;top:606px;width:54px;height:25px;line-height:25px;">1.03</div><div class="t" style="left:681px;top:606px;width:68px;height:25px;line-height:25px;">2.22</div><div class="t" style="left:749px;top:606px;width:69px;height:25px;line-height:25px;">2.99</div><div class="t" style="left:818px;top:606px;width:70px;height:25px;line-height:25px;">3.44</div><div class="t" style="left:888px;top:606px;width:40px;height:25px;line-height:25px;color:#cc0000">胜</div><div class="t" style="left:928px;top:606px;width:40px;height:25px;line-height:25px;color:#cc0000">赢</div><div class="t" style="left:968px;top:606px;width:60px;height:25px;line-height:25px;color:#1414a8">小</div><div class="t" style="left:1px;top:632px;width:81px;height:25px;line-height:25px;color:#fff;-webkit-text-stroke:0.25px #fff">丹麦超</div><div class="t" style="left:82px;top:632px;width:79px;height:25px;line-height:25px;">24-05-12</div><div class="t" style="left:161px;top:632px;width:78px;height:25px;line-height:25px;">维堡</div><div class="t" style="left:239px;top:632px;width:94px;height:25px;line-height:25px;"><span style="color:#cc0000">1-2</span>(1-1)</div><div class="t" style="left:333px;top:632px;width:41px;height:25px;line-height:25px;">6-4</div><div class="t" style="left:374px;top:632px;width:116px;height:25px;line-height:25px;"><span style="color:#1b7a1b">维积利</span></div><div class="t" style="left:490px;top:632px;width:50px;height:25px;line-height:25px;">1.08</div><div class="t" style="left:540px;top:632px;width:87px;height:25px;line-height:25px;">半球</div><div class="t" style="left:627px;top:632px;width:54px;height:25px;line-height:25px;">0.80</div><div class="t" style="left:681px;top:632px;width:68px;height:25px;line-height:25px;">1.92</div><div class="t" style="left:749px;top:632px;width:69px;height:25px;line-height:25px;">3.48</div><div class="t" style="left:818px;top:632px;width:70px;height:25px;line-height:25px;">3.74</div><div class="t" style="left:888px;top:632px;width:40px;height:25px;line-height:25px;color:#cc0000">胜</div><div class="t" style="left:928px;top:632px;width:40px;height:25px;line-height:25px;color:#cc0000">赢</div><div class="t" style="left:968px;top:632px;width:60px;height:25px;line-height:25px;color:#cc0000">大</div><div class="t" style="left:1px;top:658px;width:81px;height:25px;line-height:25px;color:#fff;-webkit-text-stroke:0.25px #fff">丹麦超</div><div class="t" style="left:82px;top:658px;width:79px;height:25px;line-height:25px;">24-05-07</div><div class="t" style="left:161px;top:658px;width:78px;height:25px;line-height:25px;"><span style="color:#1b7a1b">维积利</span></div><div class="t" style="left:239px;top:658px;width:94px;height:25px;line-height:25px;"><span style="color:#cc0000">3-2</span>(1-1)</div><div class="t" style="left:333px;top:658px;width:41px;height:25px;line-height:25px;">4-5</div><div class="t" style="left:374px;top:658px;width:116px;height:25px;line-height:25px;">欧登塞</div><div class="t" style="left:490px;top:658px;width:50px;height:25px;line-height:25px;">1.05</div><div class="t" style="left:540px;top:658px;width:87px;height:25px;line-height:25px;">平<span style="margin:0 0.6px">/</span>半</div><div class="t" style="left:627px;top:658px;width:54px;height:25px;line-height:25px;">0.83</div><div class="t" style="left:681px;top:658px;width:68px;height:25px;line-height:25px;">2.42</div><div class="t" style="left:749px;top:658px;width:69px;height:25px;line-height:25px;">3.11</div><div class="t" style="left:818px;top:658px;width:70px;height:25px;line-height:25px;">2.93</div><div class="t" style="left:888px;top:658px;width:40px;height:25px;line-height:25px;color:#cc0000">胜</div><div class="t" style="left:928px;top:658px;width:40px;height:25px;line-height:25px;color:#cc0000">赢</div><div class="t" style="left:968px;top:658px;width:60px;height:25px;line-height:25px;color:#cc0000">大</div><div class="t" style="left:1px;top:684px;width:81px;height:25px;line-height:25px;color:#fff;-webkit-text-stroke:0.25px #fff">丹麦超</div><div class="t" style="left:82px;top:684px;width:79px;height:25px;line-height:25px;">24-04-27</div><div class="t" style="left:161px;top:684px;width:78px;height:25px;line-height:25px;">利恩比</div><div class="t" style="left:239px;top:684px;width:94px;height:25px;line-height:25px;"><span style="color:#cc0000">1-1</span>(1-0)</div><div class="t" style="left:333px;top:684px;width:41px;height:25px;line-height:25px;">4-4</div><div class="t" style="left:374px;top:684px;width:116px;height:25px;line-height:25px;"><span style="color:#1b7a1b">维积利</span></div><div class="t" style="left:490px;top:684px;width:50px;height:25px;line-height:25px;">0.83</div><div class="t" style="left:540px;top:684px;width:87px;height:25px;line-height:25px;">平手</div><div class="t" style="left:627px;top:684px;width:54px;height:25px;line-height:25px;">1.05</div><div class="t" style="left:681px;top:684px;width:68px;height:25px;line-height:25px;">2.39</div><div class="t" style="left:749px;top:684px;width:69px;height:25px;line-height:25px;">3.19</div><div class="t" style="left:818px;top:684px;width:70px;height:25px;line-height:25px;">2.90</div><div class="t" style="left:888px;top:684px;width:40px;height:25px;line-height:25px;color:#1b7a1b">平</div><div class="t" style="left:928px;top:684px;width:40px;height:25px;line-height:25px;color:#1b7a1b">走</div><div class="t" style="left:968px;top:684px;width:60px;height:25px;line-height:25px;color:#1414a8">小</div><div class="t" style="left:2px;top:710px;width:1026px;height:25px;line-height:25px;letter-spacing:0.25px">近<span style="color:#cc0000">10</span>场,胜7平1负2, 胜率:<span style="color:#cc0000">70%</span> 让胜率:<span style="color:#cc0000">62.5%</span> 大率:<span style="color:#cc0000">37.5%</span> 单率:<span style="color:#cc0000">70%</span></div><div class="sel" style="left:541px;top:59px;width:61px;height:19px;"><span style="">Crow*</span><svg width="11" height="7" viewBox="0 0 11 7" style="position:absolute;right:3px;top:5.0px"><path d="M1.2 1.2 L5.5 5.4 L9.8 1.2" fill="none" stroke="#000" stroke-width="2.1"/></svg></div><div class="sel" style="left:609px;top:59px;width:51px;height:19px;"><span style="">终指</span><svg width="11" height="7" viewBox="0 0 11 7" style="position:absolute;right:3px;top:5.0px"><path d="M1.2 1.2 L5.5 5.4 L9.8 1.2" fill="none" stroke="#000" stroke-width="2.1"/></svg></div><div class="sel" style="left:729px;top:59px;width:70px;height:19px;"><span style="">平均值</span><svg width="11" height="7" viewBox="0 0 11 7" style="position:absolute;right:3px;top:5.0px"><path d="M1.2 1.2 L5.5 5.4 L9.8 1.2" fill="none" stroke="#000" stroke-width="2.1"/></svg></div><div class="sel" style="left:806px;top:59px;width:51px;height:19px;"><span style="">终指</span><svg width="11" height="7" viewBox="0 0 11 7" style="position:absolute;right:3px;top:5.0px"><path d="M1.2 1.2 L5.5 5.4 L9.8 1.2" fill="none" stroke="#000" stroke-width="2.1"/></svg></div><div class="sel" style="left:935px;top:59px;width:51px;height:19px;"><span style="">全场</span><svg width="11" height="7" viewBox="0 0 11 7" style="position:absolute;right:3px;top:5.0px"><path d="M1.2 1.2 L5.5 5.4 L9.8 1.2" fill="none" stroke="#000" stroke-width="2.1"/></svg></div><div class="sel" style="left:526px;top:410px;width:61px;height:19px;"><span style="">Crow*</span><svg width="11" height="7" viewBox="0 0 11 7" style="position:absolute;right:3px;top:5.0px"><path d="M1.2 1.2 L5.5 5.4 L9.8 1.2" fill="none" stroke="#000" stroke-width="2.1"/></svg></div><div class="sel" style="left:594px;top:410px;width:51px;height:19px;"><span style="">终指</span><svg width="11" height="7" viewBox="0 0 11 7" style="position:absolute;right:3px;top:5.0px"><path d="M1.2 1.2 L5.5 5.4 L9.8 1.2" fill="none" stroke="#000" stroke-width="2.1"/></svg></div><div class="sel" style="left:720px;top:410px;width:70px;height:19px;"><span style="">平均值</span><svg width="11" height="7" viewBox="0 0 11 7" style="position:absolute;right:3px;top:5.0px"><path d="M1.2 1.2 L5.5 5.4 L9.8 1.2" fill="none" stroke="#000" stroke-width="2.1"/></svg></div><div class="sel" style="left:798px;top:410px;width:51px;height:19px;"><span style="">终指</span><svg width="11" height="7" viewBox="0 0 11 7" style="position:absolute;right:3px;top:5.0px"><path d="M1.2 1.2 L5.5 5.4 L9.8 1.2" fill="none" stroke="#000" stroke-width="2.1"/></svg></div><div class="sel" style="left:933px;top:410px;width:51px;height:19px;"><span style="">全场</span><svg width="11" height="7" viewBox="0 0 11 7" style="position:absolute;right:3px;top:5.0px"><path d="M1.2 1.2 L5.5 5.4 L9.8 1.2" fill="none" stroke="#000" stroke-width="2.1"/></svg></div><div class="t" style="left:357px;top:32px;height:25px;line-height:31px;text-align:left;color:#333">近</div><div class="sel" style="left:373px;top:39px;width:38px;height:17px;"><span style="font-family:"Liberation Serif",serif;left:5px;">10</span><svg width="11" height="7" viewBox="0 0 11 7" style="position:absolute;right:3px;top:4.0px"><path d="M1.2 1.2 L5.5 5.4 L9.8 1.2" fill="none" stroke="#000" stroke-width="2.1"/></svg></div><div class="t" style="left:415px;top:32px;height:25px;line-height:31px;text-align:left;color:#333">场</div><div style="left:431px;top:39px;width:11px;height:11px;background:#fff;border:1px solid #767676;border-radius:2px"></div><div class="t" style="left:448px;top:32px;height:25px;line-height:31px;text-align:left;color:#333">同主</div><div style="left:471px;top:39px;width:13px;height:13px;background:#1a73e8;border-radius:2px"><svg width="13" height="13" viewBox="0 0 13 13" style="position:absolute;left:0;top:0"><path d="M2.8 6.4 L5.6 9.2 L11 3" fill="none" stroke="#fff" stroke-width="2"/></svg></div><div class="t" style="left:484px;top:32px;height:25px;line-height:31px;text-align:left;color:#333">欧会杯</div><div style="left:520px;top:39px;width:13px;height:13px;background:#1a73e8;border-radius:2px"><svg width="13" height="13" viewBox="0 0 13 13" style="position:absolute;left:0;top:0"><path d="M2.8 6.4 L5.6 9.2 L11 3" fill="none" stroke="#fff" stroke-width="2"/></svg></div><div class="t" style="left:533px;top:32px;height:25px;line-height:31px;text-align:left;color:#333">丹麦超</div><div style="left:569px;top:39px;width:13px;height:13px;background:#1a73e8;border-radius:2px"><svg width="13" height="13" viewBox="0 0 13 13" style="position:absolute;left:0;top:0"><path d="M2.8 6.4 L5.6 9.2 L11 3" fill="none" stroke="#fff" stroke-width="2"/></svg></div><div class="t" style="left:582px;top:32px;height:25px;line-height:31px;text-align:left;color:#333">球会友谊</div><div style="left:630px;top:39px;width:13px;height:13px;background:#1a73e8;border-radius:2px"><svg width="13" height="13" viewBox="0 0 13 13" style="position:absolute;left:0;top:0"><path d="M2.8 6.4 L5.6 9.2 L11 3" fill="none" stroke="#fff" stroke-width="2"/></svg></div><div class="t" style="left:643px;top:32px;height:25px;line-height:31px;text-align:left;color:#333">大西洋杯</div><div style="left:691px;top:39px;width:13px;height:13px;background:#1a73e8;border-radius:2px"><svg width="13" height="13" viewBox="0 0 13 13" style="position:absolute;left:0;top:0"><path d="M2.8 6.4 L5.6 9.2 L11 3" fill="none" stroke="#fff" stroke-width="2"/></svg></div><div class="t" style="left:704px;top:32px;height:25px;line-height:31px;text-align:left;color:#333">丹麦杯</div><div class="t" style="left:403px;top:384px;height:25px;line-height:31px;text-align:left;color:#333">近</div><div class="sel" style="left:420px;top:390px;width:38px;height:17px;"><span style="font-family:"Liberation Serif",serif;left:5px;">10</span><svg width="11" height="7" viewBox="0 0 11 7" style="position:absolute;right:3px;top:4.0px"><path d="M1.2 1.2 L5.5 5.4 L9.8 1.2" fill="none" stroke="#000" stroke-width="2.1"/></svg></div><div class="t" style="left:462px;top:384px;height:25px;line-height:31px;text-align:left;color:#333">场</div><div style="left:478px;top:390px;width:11px;height:11px;background:#fff;border:1px solid #767676;border-radius:2px"></div><div class="t" style="left:494px;top:384px;height:25px;line-height:31px;text-align:left;color:#333">同客</div><div style="left:522px;top:390px;width:13px;height:13px;background:#1a73e8;border-radius:2px"><svg width="13" height="13" viewBox="0 0 13 13" style="position:absolute;left:0;top:0"><path d="M2.8 6.4 L5.6 9.2 L11 3" fill="none" stroke="#fff" stroke-width="2"/></svg></div><div class="t" style="left:535px;top:384px;height:25px;line-height:31px;text-align:left;color:#333">丹麦超</div><div style="left:571px;top:390px;width:13px;height:13px;background:#1a73e8;border-radius:2px"><svg width="13" height="13" viewBox="0 0 13 13" style="position:absolute;left:0;top:0"><path d="M2.8 6.4 L5.6 9.2 L11 3" fill="none" stroke="#fff" stroke-width="2"/></svg></div><div class="t" style="left:584px;top:384px;height:25px;line-height:31px;text-align:left;color:#333">球会友谊</div><div style="left:632px;top:390px;width:13px;height:13px;background:#1a73e8;border-radius:2px"><svg width="13" height="13" viewBox="0 0 13 13" style="position:absolute;left:0;top:0"><path d="M2.8 6.4 L5.6 9.2 L11 3" fill="none" stroke="#fff" stroke-width="2"/></svg></div><div class="t" style="left:645px;top:384px;height:25px;line-height:31px;text-align:left;color:#333">丹麦杯</div><div class="t" style="left:436px;top:3px;height:30px;line-height:31px;text-align:left;color:#fff;font-weight:bold;font-size:15px">近期战绩</div><div style="left:502px;top:13px;width:13px;height:13px;border-radius:50%;background:#fff;box-sizing:border-box;border:1px solid #888"></div><div class="t" style="left:519px;top:3px;height:30px;line-height:34px;text-align:left;color:#fff;-webkit-text-stroke:0.2px #fff">竖版</div><div style="left:552px;top:13px;width:13px;height:13px"><svg width="13" height="13" viewBox="0 0 13 13"><circle cx="6.5" cy="6.5" r="6.2" fill="#1a6fe8"/><circle cx="6.5" cy="6.5" r="4.6" fill="none" stroke="#fff" stroke-width="1.4"/></svg></div><div class="t" style="left:569px;top:3px;height:30px;line-height:34px;text-align:left;color:#fff;-webkit-text-stroke:0.2px #fff">横版</div>
</body></html>
